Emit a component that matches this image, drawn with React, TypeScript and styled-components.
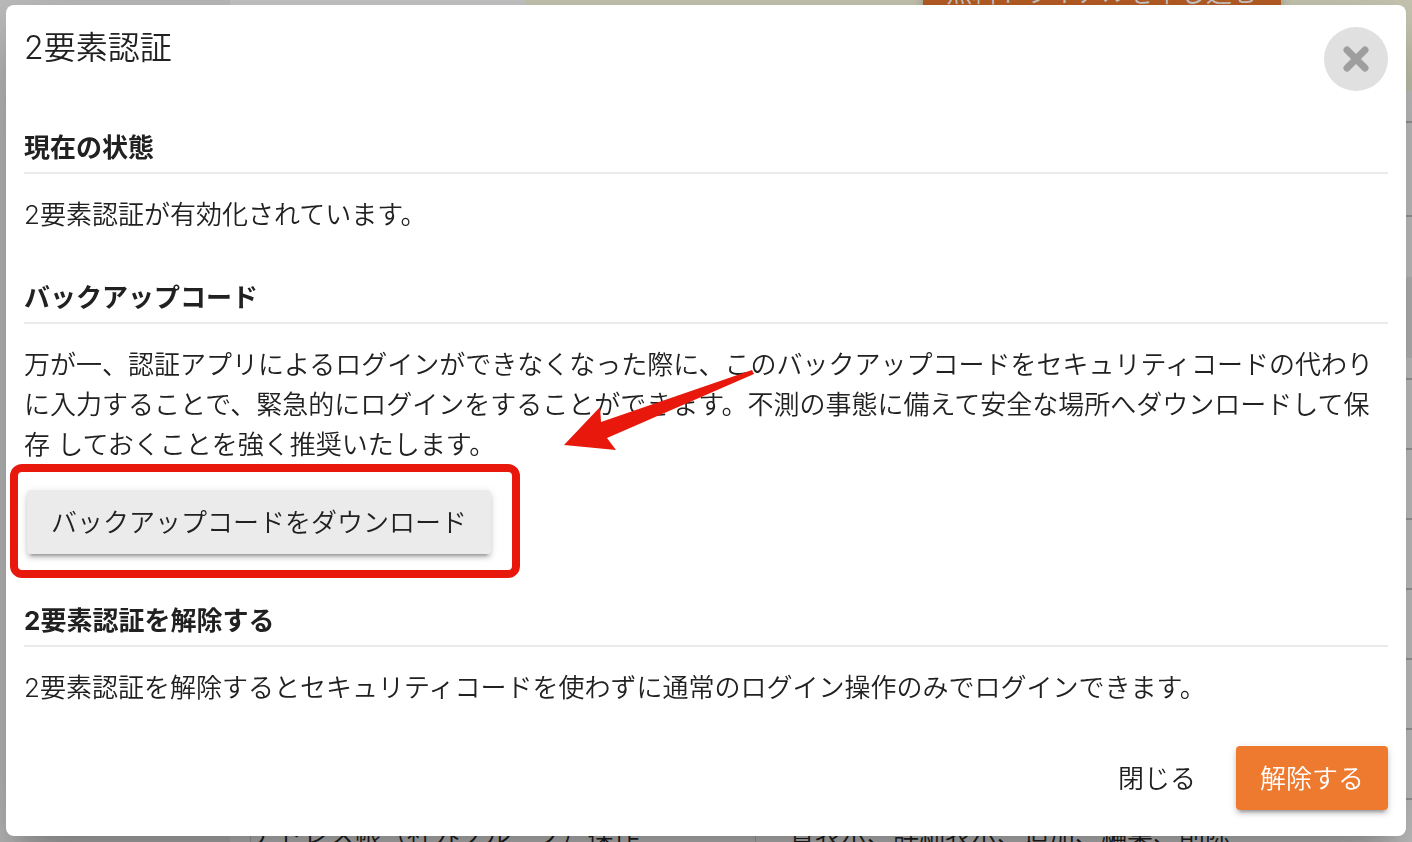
import React from 'react';
import styled, { createGlobalStyle } from 'styled-components';

const GlobalStyle = createGlobalStyle`
  *, *::before, *::after { box-sizing: border-box; }
  body {
    margin: 0;
    background: #bfbfbf;
    color: #212121;
    font-family: Inter, 'Noto Sans CJK JP', sans-serif;
    font-size: 26px;
    font-weight: 350;
    line-height: 40px;
  }
  h1, h2, p { margin: 0; }
  button { font: inherit; color: inherit; border: 0; cursor: pointer; }
`;

const Page = styled.div`
  position: fixed;
  inset: 0;
  overflow: hidden;
  display: grid;
  grid-template-columns: 230px 1fr;
`;

const Sidebar = styled.aside`
  background: #bebebe;
`;

const Scrolled = styled.div`
  margin-top: -40px;
  background: #c9c9c9;
`;

const Banner = styled.header`
  display: flex;
  height: 131px;
`;

const BannerLead = styled.div`
  flex: 0 0 295px;
  background: #c9c9c9;
`;

const BannerMain = styled.div`
  flex: 1;
  display: flex;
  justify-content: flex-end;
  align-items: flex-start;
  padding-right: 131px;
  background: #c8c8b3;
`;

const TrialButton = styled.button`
  height: 64px;
  padding: 2px 23px 0;
  background: #b95e25;
  color: #cccccc;
  box-shadow: 0 2px 10px rgba(0, 0, 0, 0.2);
`;

const PermissionTable = styled.table`
  width: calc(100% - 20px);
  margin-left: 20px;
  border-collapse: collapse;
  table-layout: fixed;
`;

const Row = styled.tr<{ $height: number; $shaded?: boolean }>`
  height: ${(p) => p.$height}px;
  background: ${(p) => (p.$shaded ? '#bcbcbc' : 'transparent')};
`;

const Cell = styled.td<{ $ruled?: boolean }>`
  padding: 2px 8px 0 0;
  border-bottom: ${(p) => (p.$ruled ? '2px solid #9d9d9d' : '0')};
  white-space: nowrap;
  &:first-child { width: 505px; border-left: 1px solid #acacac; border-right: 1px solid #acacac; }
  &:last-child { padding-left: 7px; }
`;

const Overlay = styled.div`
  position: relative;
  min-height: 100vh;
  overflow: hidden;
  padding: 5px 6px;
`;

const Dialog = styled.section`
  padding: 22px 18px 26px;
  border-radius: 8px;
  background: #ffffff;
  box-shadow:
    0 22px 30px -14px rgba(0, 0, 0, 0.2),
    0 48px 76px 6px rgba(0, 0, 0, 0.14),
    0 18px 92px 16px rgba(0, 0, 0, 0.12);
`;

const DialogHeader = styled.header`
  display: flex;
  justify-content: space-between;
  align-items: flex-start;
`;

const Title = styled.h1`
  font-size: 32px;
  font-weight: 350;
  line-height: 42px;
`;

const CloseButton = styled.button`
  display: grid;
  place-items: center;
  width: 64px;
  height: 64px;
  padding: 0;
  border-radius: 50%;
  background: #e0e0e0;
`;

const Sections = styled.div`
  display: flex;
  flex-direction: column;
  gap: 43px;
  margin-top: 37px;
`;

const Heading = styled.h2`
  margin-bottom: 21px;
  padding-bottom: 4px;
  border-bottom: 2px solid #ebebeb;
  font-size: 26px;
  font-weight: 700;
`;

const DownloadArea = styled.div`
  position: relative;
  padding: 25px 3px 4px;
`;

const Button = styled.button<{ $kind: 'neutral' | 'primary' | 'flat' }>`
  height: 64px;
  padding: 2px 24px 0;
  display: block;
  border-radius: 4px;
  background: ${(p) => ({ neutral: '#ebebeb', primary: '#ee7a30', flat: 'transparent' })[p.$kind]};
  color: ${(p) => (p.$kind === 'primary' ? '#ffffff' : '#212121')};
  box-shadow: ${(p) =>
    p.$kind === 'flat'
      ? 'none'
      : '0 6px 2px -4px rgba(0,0,0,.2), 0 4px 4px rgba(0,0,0,.14), 0 2px 10px rgba(0,0,0,.12)'};
`;

const Highlight = styled.div`
  position: absolute;
  left: -14px;
  top: -1px;
  width: 510px;
  height: 114px;
  border: 8px solid #e8190c;
  border-radius: 12px;
  pointer-events: none;
`;

const Arrow = styled.svg`
  position: absolute;
  left: 536px;
  top: -97px;
  pointer-events: none;
`;

const Actions = styled.footer`
  display: flex;
  justify-content: flex-end;
  gap: 16px;
  margin-top: 38px;
`;

const rows = [
  { height: 31, ruled: true },
  { height: 94, ruled: true },
  { height: 61 },
  { height: 81, shaded: true },
  { height: 21, ruled: true },
  { height: 70, ruled: true },
  { height: 70, ruled: true },
  { height: 70, ruled: true },
  { height: 70, ruled: true },
  { height: 70, ruled: true },
  { height: 70, ruled: true },
  {
    height: 70,
    ruled: true,
    name: 'アドレス帳（社外グループ）操作',
    detail: '一覧表示、詳細表示、追加、編集、削除',
  },
];

export default function App() {
  return (
    <>
      <GlobalStyle />
      <Page aria-hidden="true">
        <Sidebar />
        <Scrolled>
          <Banner>
            <BannerLead />
            <BannerMain>
              <TrialButton type="button" tabIndex={-1}>無料トライアルを申し込む</TrialButton>
            </BannerMain>
          </Banner>
          <PermissionTable>
            <tbody>
              {rows.map((row, i) => (
                <Row key={i} $height={row.height} $shaded={row.shaded}>
                  <Cell $ruled={row.ruled}>{row.name}</Cell>
                  <Cell $ruled={row.ruled}>{row.detail}</Cell>
                </Row>
              ))}
            </tbody>
          </PermissionTable>
        </Scrolled>
      </Page>

      <Overlay>
        <Dialog role="dialog" aria-modal="true" aria-labelledby="dialog-title">
          <DialogHeader>
            <Title id="dialog-title">2要素認証</Title>
            <CloseButton type="button" aria-label="閉じる">
              <svg width="26" height="26" viewBox="0 0 26 26" aria-hidden="true">
                <path d="M4 4L22 22M22 4L4 22" stroke="#9e9e9e" strokeWidth="7" strokeLinecap="round" />
              </svg>
            </CloseButton>
          </DialogHeader>

          <Sections>
            <section>
              <Heading>現在の状態</Heading>
              <p>2要素認証が有効化されています。</p>
            </section>
            <section>
              <Heading>バックアップコード</Heading>
              <p>
                万が一、認証アプリによるログインができなくなった際に、このバックアップコードをセキュリティコードの代わりに入力することで、緊急的にログインをすることができます。不測の事態に備えて安全な場所へダウンロードして保存 しておくことを強く推奨いたします。
              </p>
              <DownloadArea>
                <Button type="button" $kind="neutral">バックアップコードをダウンロード</Button>
                <Highlight />
                <Arrow width="200" height="90" viewBox="560 368 200 90" aria-hidden="true">
                  <path d="M564 445L600 407L601 422L752 370L754 374L607 438L616 450Z" fill="#e8190c" />
                </Arrow>
              </DownloadArea>
            </section>
            <section>
              <Heading>2要素認証を解除する</Heading>
              <p>2要素認証を解除するとセキュリティコードを使わずに通常のログイン操作のみでログインできます。</p>
            </section>
          </Sections>

          <Actions>
            <Button type="button" $kind="flat">閉じる</Button>
            <Button type="button" $kind="primary">解除する</Button>
          </Actions>
        </Dialog>
      </Overlay>
    </>
  );
}
